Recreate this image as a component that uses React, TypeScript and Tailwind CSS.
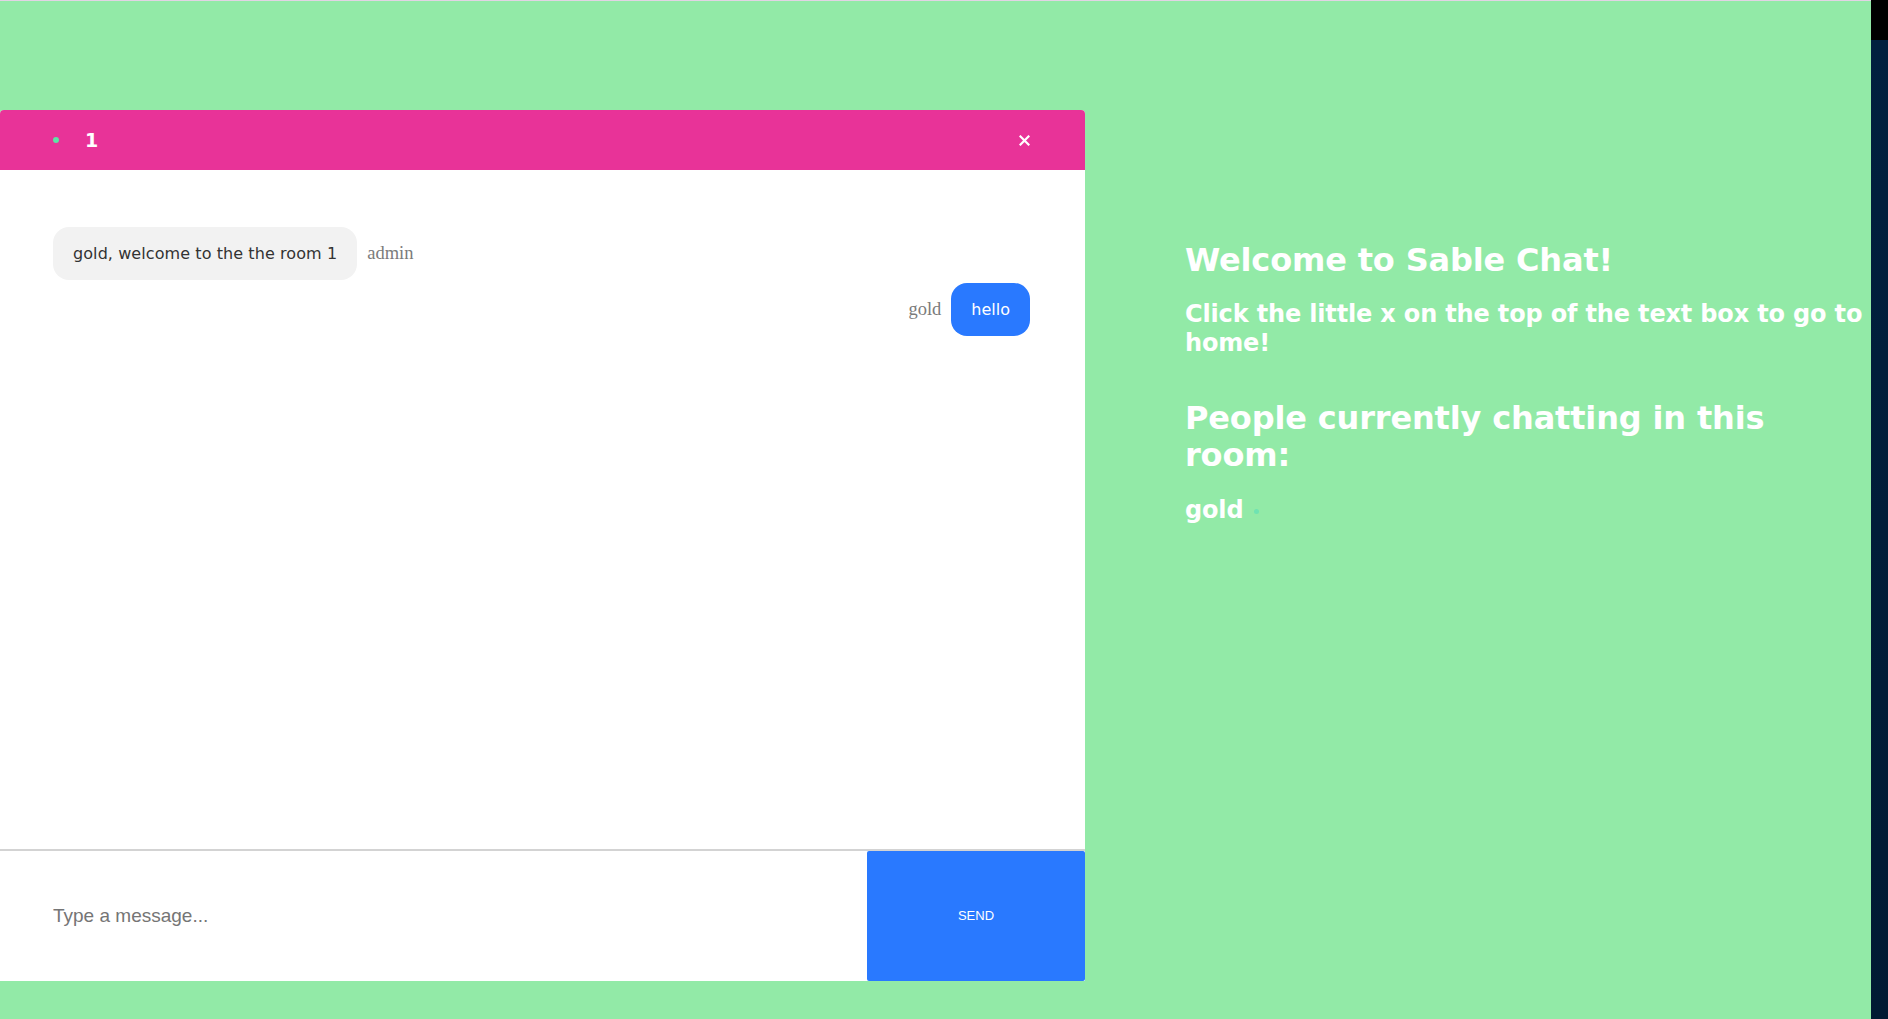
import React from "react";

function CloseIcon() {
  return (
    <svg width="11" height="11" viewBox="0 0 11 11" aria-hidden="true">
      <path d="M1.5 1.5 L9.5 9.5 M9.5 1.5 L1.5 9.5" stroke="#ffffff" strokeWidth="2.2" strokeLinecap="square" />
    </svg>
  );
}

export default function App() {
  return (
    <div className="flex h-[1019px] w-full overflow-hidden bg-[#92eaa7]">
      <div className="flex min-w-0 flex-1 items-start border-t border-[#e2d4e4] pt-[109px]">
        {/* Chat panel */}
        <div className="flex h-[871px] w-[1085px] shrink-0 flex-col overflow-hidden rounded-t-[4px] bg-white">
          <div className="flex h-[60px] shrink-0 items-center bg-[#e83398] pl-[53px] pr-[55px]">
            <span className="h-[6px] w-[6px] rounded-full bg-[#5ee3a6]" />
            <span className="ml-[26px] font-['DejaVu_Sans',sans-serif] text-[19px] font-bold leading-none text-white">1</span>
            <div className="ml-auto flex items-center">
              <CloseIcon />
            </div>
          </div>
          <div className="flex flex-1 flex-col gap-[3px] pl-[53px] pr-[55px] pt-[57px]">
            <div className="flex items-center">
              <div className="flex h-[53px] items-center rounded-[16px] bg-[#f2f2f2] px-5 font-['DejaVu_Sans',sans-serif] text-[16px] tracking-[0.08px] text-[#333]">
                gold, welcome to the the room 1
              </div>
              <span className="ml-[10px] font-['Liberation_Serif',serif] text-[18.5px] text-[#7b7b7b]">admin</span>
            </div>
            <div className="flex items-center justify-end">
              <span className="mr-[10px] font-['Liberation_Serif',serif] text-[18.5px] text-[#7b7b7b]">gold</span>
              <div className="flex h-[53px] items-center rounded-[16px] bg-[#2979ff] px-5 font-['DejaVu_Sans',sans-serif] text-[16px] text-white">
                hello
              </div>
            </div>
          </div>
          <div className="flex h-[132px] shrink-0 border-t-2 border-[#d3d3d3]">
            <div className="flex flex-1 items-center pl-[53px]">
              <input
                type="text"
                placeholder="Type a message..."
                className="w-full bg-transparent font-['Liberation_Sans',Arial,sans-serif] text-[19px] text-[#333] outline-none placeholder:text-[#757575]"
              />
            </div>
            <button className="flex w-[218px] items-center justify-center rounded-[2px] bg-[#2979ff] font-['Liberation_Sans',Arial,sans-serif] text-[13px] text-white">
              SEND
            </button>
          </div>
        </div>

        {/* Sidebar */}
        <div className="min-w-0 flex-1 pl-[100px] pt-[132px] font-['DejaVu_Sans',sans-serif] font-bold tracking-[-0.16px] text-white">
          <h1 className="text-[32px] leading-[37px]">Welcome to Sable Chat!</h1>
          <h2 className="mt-[21px] text-[24px] leading-[29px]">
            Click the little x on the top of the text box to go to home!
          </h2>
          <h1 className="mt-[42px] text-[32px] leading-[37px]">People currently chatting in this room:</h1>
          <div className="mt-[22px] flex items-center text-[24px] leading-[28px]">
            <span>gold</span>
            <span className="ml-[11px] mt-[2px] h-[5px] w-[5px] rounded-full bg-[#6fe3b2]" />
          </div>
        </div>
      </div>
      <div className="flex w-[17px] shrink-0 flex-col">
        <div className="h-[40px] bg-black" />
        <div className="flex-1 bg-gradient-to-b from-[#01203f] to-[#011a33]" />
      </div>
    </div>
  );
}
